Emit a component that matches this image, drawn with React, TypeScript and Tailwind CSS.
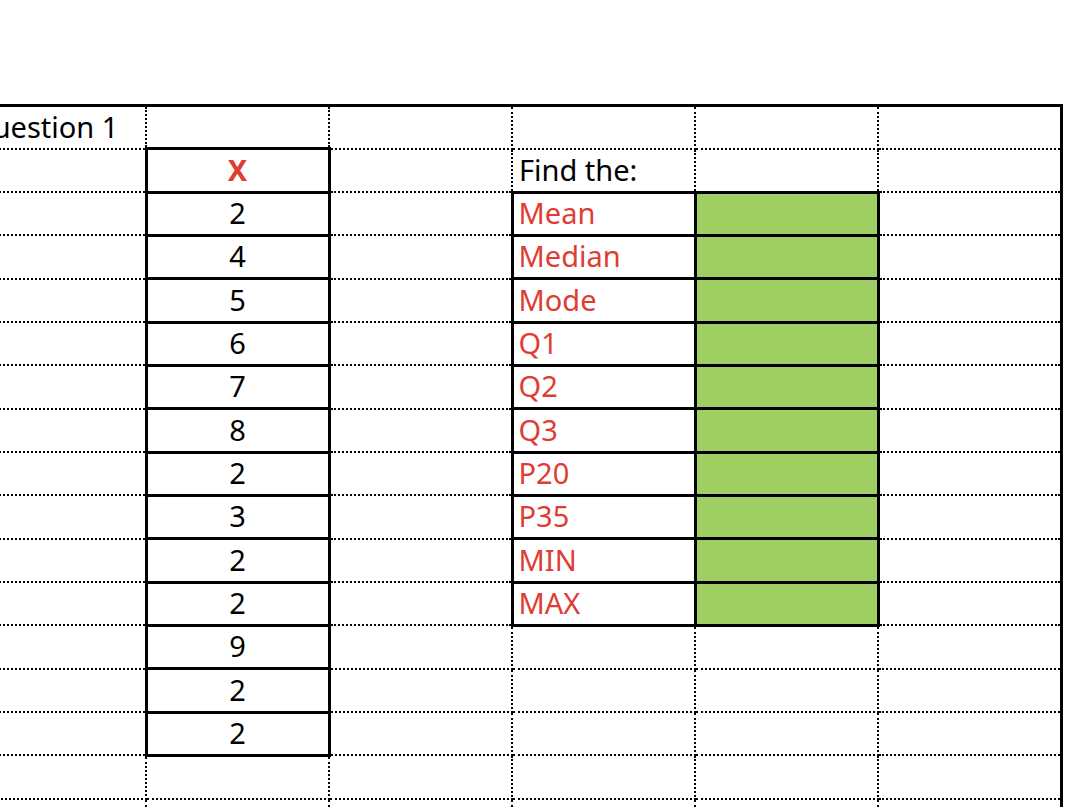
import React from 'react';

const values = ['2', '4', '5', '6', '7', '8', '2', '3', '2', '2', '9', '2', '2'];
const stats = ['Mean', 'Median', 'Mode', 'Q1', 'Q2', 'Q3', 'P20', 'P35', 'MIN', 'MAX'];

const ROWS = 17;
const COLS = 6;

function Cell({ solid, green, children, className = '' }: { solid?: boolean; green?: boolean; children?: React.ReactNode; className?: string }) {
  return (
    <td
      className={`border-black p-0 pb-[2px] align-bottom h-[43.33px] leading-[38px] whitespace-nowrap overflow-hidden ${solid ? 'border-[3px] border-solid' : 'border-2 border-dotted'} ${green ? 'bg-[#9fce62]' : ''} ${className}`}
    >
      {children}
    </td>
  );
}

export default function App() {
  const rows = Array.from({ length: ROWS }, (_, r) => r);

  return (
    <div className="w-[1066px] h-[807px] overflow-hidden bg-white pt-[104px]" style={{ fontFamily: '"Noto Sans", "Open Sans", sans-serif' }}>
      <table className="ml-[-38px] w-[1098px] table-fixed border-collapse border-t-[3px] border-r-[3px] border-black text-[29px] text-black">
        <colgroup>
          {Array.from({ length: COLS }, (_, c) => (
            <col key={c} className="w-[183px]" />
          ))}
        </colgroup>
        <tbody>
          {rows.map((r) => {
            const valIdx = r - 2;
            const statIdx = r - 2;
            const hasVal = r === 1 || (valIdx >= 0 && valIdx < values.length);
            const hasStat = statIdx >= 0 && statIdx < stats.length;
            return (
              <tr key={r}>
                <Cell>{r === 0 && <span className="pl-[6px]">Question 1</span>}</Cell>
                <Cell solid={hasVal} className="text-center">
                  {r === 1 ? <span className="font-bold text-[#e03c31]">X</span> : hasVal ? values[valIdx] : null}
                </Cell>
                <Cell />
                <Cell solid={hasStat}>
                  {r === 1 && <span className="pl-[6px]">Find the:</span>}
                  {hasStat && <span className="pl-[5px] text-[#e03c31]">{stats[statIdx]}</span>}
                </Cell>
                <Cell solid={hasStat} green={hasStat} />
                <Cell />
              </tr>
            );
          })}
        </tbody>
      </table>
    </div>
  );
}
